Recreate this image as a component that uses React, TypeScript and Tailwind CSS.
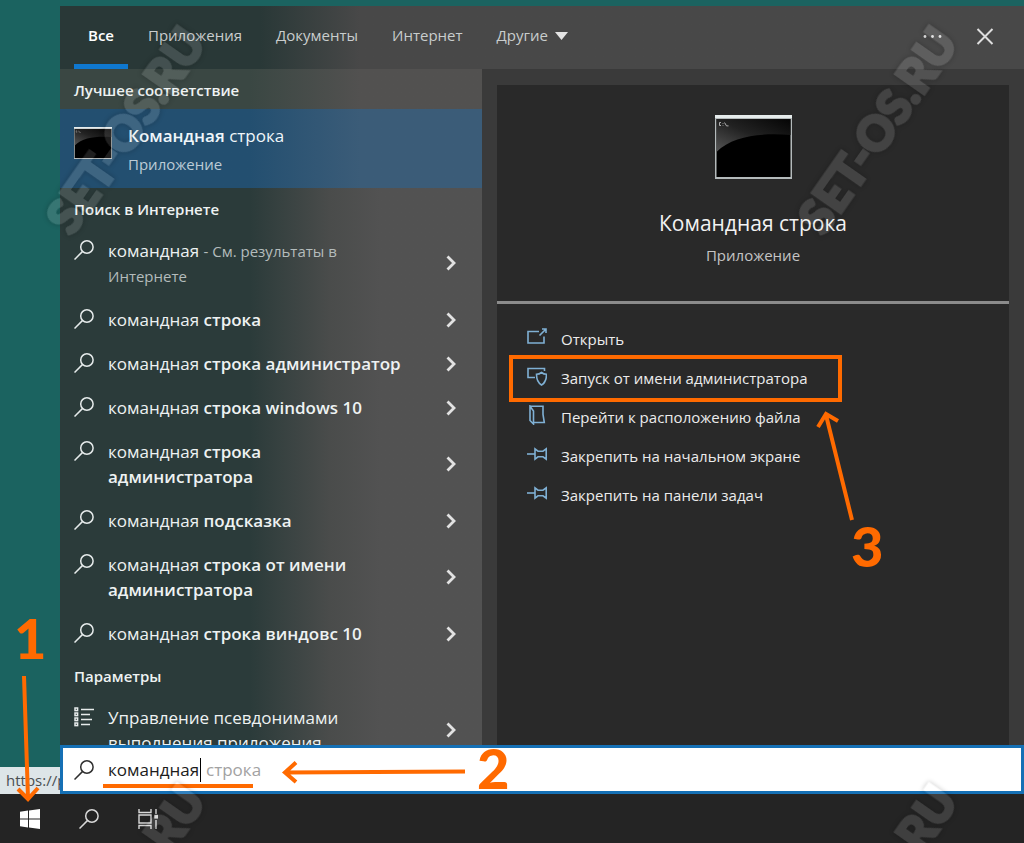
import React from 'react';

const tabs = ['Все', 'Приложения', 'Документы', 'Интернет'];

const suggestions = [
  { typed: 'командная', hint: 'См. результаты в Интернете' },
  { typed: 'командная', rest: 'строка' },
  { typed: 'командная', rest: 'строка администратор' },
  { typed: 'командная', rest: 'строка windows 10' },
  { typed: 'командная', rest: 'строка администратора' },
  { typed: 'командная', rest: 'подсказка' },
  { typed: 'командная', rest: 'строка от имени администратора' },
  { typed: 'командная', rest: 'строка виндовс 10' },
];

const SearchIcon = () => (
  <svg className="w-5 h-5 shrink-0" viewBox="0 0 20 20" fill="none" stroke="currentColor" strokeWidth="1.5">
    <circle cx="12.9" cy="7" r="6.2" />
    <path d="M8.4 11.6 0.5 19.5" />
  </svg>
);

const Chevron = () => (
  <svg className="w-[10px] h-4 shrink-0 text-[#e2e2e2]" viewBox="0 0 10 16" fill="none" stroke="currentColor" strokeWidth="2.8">
    <path d="M1.5 1.5 8 8l-6.5 6.5" />
  </svg>
);

const SettingsListIcon = () => (
  <svg className="w-5 h-5 shrink-0" viewBox="0 0 20 20" fill="none" stroke="currentColor">
    <path strokeWidth="1.6" d="M7 2.500h13M7 7.500h9M7 12.500h11M7 17.500h9" />
    <g strokeWidth="1.5">
      <rect x="1" y="1" width="2.600" height="2.600" />
      <rect x="1" y="6" width="2.600" height="2.600" />
      <rect x="1" y="11" width="2.600" height="2.600" />
      <rect x="1" y="16" width="2.600" height="2.600" />
    </g>
  </svg>
);

const ConsoleIcon = ({ className }: { className: string }) => (
  <svg className={className} viewBox="0 0 77 64" preserveAspectRatio="none">
    <defs>
      <linearGradient id="glare" x1="0" y1="1" x2="1" y2="0">
        <stop offset="0" stopColor="#565656" />
        <stop offset="0.5" stopColor="#222" />
        <stop offset="1" stopColor="#050505" />
      </linearGradient>
    </defs>
    <rect width="77" height="64" fill="#b4babb" />
    <rect width="77" height="3" fill="#e6ecec" />
    <rect x="1.5" y="4" width="74" height="58" fill="#000" />
    <path d="M1.5 4h74v16C48 18 18 20 1.5 37Z" fill="url(#glare)" />
    <path d="M6 7.5H4.5v3H6M8 8v.8M8 10v.6M9.5 7.5l2 3.4h2" stroke="#bbb" strokeWidth="0.9" fill="none" />
  </svg>
);

const OpenIcon = () => (
  <svg className="w-5 h-5" viewBox="0 0 20 20" fill="none" stroke="currentColor" strokeWidth="1.6">
    <path d="M12 4.500H1v11.500h16V9.500" />
    <path d="m12.500 8.500 6-6M15 2h4v4" />
  </svg>
);

const AdminIcon = () => (
  <svg className="w-5 h-5" viewBox="0 0 20 20" fill="none" stroke="currentColor" strokeWidth="1.6">
    <path d="M8 11.500H1V2.500h16.500V5" />
    <path d="M14.500 6.500c1.400 1.100 3 1.700 5 1.800 0 5.500-1.300 8.500-5 10.700-3.700-2.200-5-5.200-5-10.700 2-.1 3.600-.7 5-1.800Z" />
  </svg>
);

const FolderIcon = () => (
  <svg className="w-5 h-5" viewBox="0 0 20 20" fill="none" stroke="currentColor" strokeWidth="1.6">
    <path d="M3 1.200h13v8.300l1.300 8H7" />
    <path d="M3 1.200v14.300l3.500 3.500V6L3 1.200Z" />
  </svg>
);

const PinIcon = () => (
  <svg className="w-5 h-5" viewBox="0 0 20 20" fill="none" stroke="currentColor" strokeWidth="1.6">
    <path d="M0 10h8" />
    <path d="M8 4.800v10.400l3-2.400h5l3.200 2.400V4.800L16 7.200h-5L8 4.800Z" />
  </svg>
);

const actions = [
  { label: 'Открыть', icon: OpenIcon },
  { label: 'Запуск от имени администратора', icon: AdminIcon, marked: true },
  { label: 'Перейти к расположению файла', icon: FolderIcon },
  { label: 'Закрепить на начальном экране', icon: PinIcon },
  { label: 'Закрепить на панели задач', icon: PinIcon },
];

const GroupTitle = ({ children }: { children: React.ReactNode }) => (
  <h2 className="h-10 pt-[2px] pl-[14px] flex items-center text-[15px] font-semibold text-[#eef2f2]">{children}</h2>
);

const Row = ({ icon, children }: { icon: React.ReactNode; children: React.ReactNode }) => (
  <button className="w-full flex items-center justify-between pl-[14px] pr-[26px] pt-[10px] pb-[9px] text-left">
    <span className="flex gap-[14px] text-[#e6ebeb]">
      <span className="pt-[2px]">{icon}</span>
      <span className="max-w-[298px] text-[17px] leading-[25px] text-[#eef2f2]">{children}</span>
    </span>
    <Chevron />
  </button>
);

const Watermark = ({ className }: { className: string }) => (
  <div
    aria-hidden="true"
    className={`absolute w-[270px] h-12 flex items-center justify-center -rotate-[55deg] font-['Lato'] font-black text-[47px] leading-none text-white opacity-12 pointer-events-none select-none [-webkit-text-stroke:3px_#fff] [filter:drop-shadow(0_0_2px_#000)_drop-shadow(0_0_2px_#000)] ${className}`}
  >
    SET-OS.RU
  </div>
);

const Digit = ({ value, className }: { value: string; className: string }) => (
  <span className={`absolute font-['Lato'] text-[56px] leading-[56px] font-black text-[#ff6a00] pointer-events-none ${className}`}>{value}</span>
);

const App = () => {
  return (
    <div className="relative h-screen flex flex-col overflow-hidden bg-[#1b6360] font-['Open_Sans','Noto_Sans',sans-serif]">
      <div className="flex-1 min-h-0 flex pt-[6px]">
        {/* Desktop strip with the browser status bubble */}
        <div className="w-[60px] shrink-0 flex flex-col justify-end">
          <div className="h-[27px] pl-[6px] flex items-center overflow-hidden whitespace-nowrap bg-[#dde5e8] text-[15px] text-[#4a4f52]">
            https://p
          </div>
        </div>

        <div className="flex-1 min-w-0 flex flex-col">
          <header className="h-[63px] shrink-0 flex justify-between pl-3 bg-linear-to-r from-[#293837] from-[200px] to-[#484848] to-[300px]">
            <nav className="flex gap-[2px] text-[15px] text-[#c9cdcd]">
              {tabs.map((tab, i) => (
                <button key={tab} className={i === 0 ? 'relative px-4 pb-1 font-semibold text-white' : 'px-4 pb-1'}>
                  {tab}
                  {i === 0 && <span className="absolute bottom-0 inset-x-[2px] h-[5px] bg-[#0f78cf]" />}
                </button>
              ))}
              <button className="px-4 pb-1 flex items-center gap-[7px]">
                Другие
                <svg className="w-[13px] h-2" viewBox="0 0 13 8" fill="#e4e4e4">
                  <path d="M0 0h13L6.500 8Z" />
                </svg>
              </button>
            </nav>
            <div className="flex items-center gap-[34px] pr-[30px] pb-[2px] text-[#dedede]">
              <button aria-label="Параметры поиска">
                <svg className="w-5 h-5" viewBox="0 0 20 20" fill="currentColor">
                  <circle cx="3" cy="9.500" r="1.400" />
                  <circle cx="10.500" cy="9.500" r="1.400" />
                  <circle cx="18" cy="9.500" r="1.400" />
                </svg>
              </button>
              <button aria-label="Закрыть">
                <svg className="w-[18px] h-[18px]" viewBox="0 0 18 18" stroke="currentColor" strokeWidth="2">
                  <path d="m1.500 1 15 15M16.500 1l-15 15" />
                </svg>
              </button>
            </div>
          </header>

          <div className="flex-1 min-h-0 flex">
            <section className="w-[422px] shrink-0 overflow-hidden bg-linear-to-r from-[#2b3b3a] from-[190px] via-[#4a4c4b] via-[270px] to-[#525252] to-[320px]">
              <div className="bg-linear-to-r from-[#3a4743] from-[190px] to-[#525150] to-[300px]">
                <GroupTitle>Лучшее соответствие</GroupTitle>
              </div>
              <button className="w-full h-[79px] flex items-start gap-4 pl-[14px] text-left bg-linear-to-r from-[#234f70] from-[190px] to-[#3b5c78] to-[300px]">
                <ConsoleIcon className="w-[38px] h-8 mt-[18px]" />
                <span className="pt-3 flex flex-col leading-[29px]">
                  <span className="text-[17px] text-[#eff6fa]">
                    <b className="font-semibold">Командная</b> строка
                  </span>
                  <span className="text-[15px] text-[#bccbd6]">Приложение</span>
                </span>
              </button>

              <GroupTitle>Поиск в Интернете</GroupTitle>
              {suggestions.map((s, i) => (
                <Row key={i} icon={<SearchIcon />}>
                  {s.typed}{' '}
                  {s.hint && <span className="text-[15px] leading-none text-[#b4bcbc]">- {s.hint}</span>}
                  {s.rest && <b className="font-semibold">{s.rest}</b>}
                </Row>
              ))}

              <GroupTitle>Параметры</GroupTitle>
              <Row icon={<SettingsListIcon />}>Управление псевдонимами выполнения приложения</Row>
            </section>

            <section className="flex-1 min-w-0 flex flex-col px-[15px] pt-4 bg-[#3a3a3a]">
              <div className="flex-1 bg-[#292929]">
                <div className="h-[219px] pt-[30px] flex flex-col items-center border-b-3 border-[#8b8b8b]">
                  <ConsoleIcon className="w-[77px] h-16" />
                  <h1 className="mt-7 text-[21px] leading-8 text-[#f2f2f2]">Командная строка</h1>
                  <p className="mt-1 text-[15px] leading-6 text-[#c4c4c4]">Приложение</p>
                </div>
                <ul className="relative pt-4">
                  {actions.map(({ label, icon: Icon, marked }) => (
                    <li key={label} className="relative">
                      <button className="h-[39px] pl-[30px] flex items-center gap-[14px] text-[15px] text-[#ececec]">
                        <span className="pb-[6px] text-[#7fb0d4]">
                          <Icon />
                        </span>
                        {label}
                      </button>
                      {marked && (
                        <span className="absolute -inset-y-1 left-3 w-[333px] border-4 border-[#ff6a00] pointer-events-none" />
                      )}
                    </li>
                  ))}
                  <svg
                    className="absolute left-[318px] top-[106px] w-10 h-[112px] pointer-events-none"
                    viewBox="0 0 40 112"
                    fill="none"
                    stroke="#ff6a00"
                    strokeWidth="4"
                  >
                    <path d="M37 110 11 5M3 17 11 4l12 7" />
                  </svg>
                  <Digit value="3" className="left-[354px] top-[214px]" />
                </ul>
              </div>
            </section>
          </div>

          <div className="relative h-[49px] shrink-0 flex items-center pl-[11px] bg-white border-3 border-[#1570b5] text-[17px]">
            <label htmlFor="query" aria-label="Поиск" className="mr-[14px] text-[#2f2f2f]">
              <SearchIcon />
            </label>
            <input id="query" className="field-sizing-content text-[#1c1c1c] outline-none" defaultValue="командная" />
            <span className="w-px h-6 mx-px bg-black" />
            <span className="pl-1 text-[#a2a2a2]">строка</span>
            <span className="absolute left-10 bottom-[3px] w-[150px] h-1 bg-[#ff6a00]" />
            <svg
              className="absolute left-[218px] top-[12px] w-[186px] h-6 pointer-events-none"
              viewBox="0 0 186 24"
              fill="none"
              stroke="#ff6a00"
              strokeWidth="4"
            >
              <path d="M184 11.500 4 12.500M15 2.500 4 12.500l11 9.500" />
            </svg>
            <Digit value="2" className="left-[414px] top-[-8px]" />
          </div>
        </div>
      </div>

      <footer className="h-[49px] shrink-0 flex bg-[#242424] text-[#d8d8d8]">
        <button aria-label="Пуск" className="w-[59px] flex items-center justify-center">
          <svg className="w-5 h-5" viewBox="0 0 20 20" fill="#fff">
            <path d="M0 2.800 8 1.600v7.900H0ZM9 1.500 20 0v9.500H9ZM0 10.500h8v7.900l-8-1.200ZM9 10.500h11V20L9 18.500Z" />
          </svg>
        </button>
        <button aria-label="Поиск" className="w-[59px] flex items-center justify-center">
          <SearchIcon />
        </button>
        <button aria-label="Представление задач" className="w-[59px] flex items-center justify-center">
          <svg className="w-5 h-5" viewBox="0 0 20 20" fill="none" stroke="currentColor" strokeWidth="1.400">
            <path d="M1 0v3.500h12V0M1 20v-3.500h12V20M1 6h12v8H1ZM18 0v5M18 11v9" />
            <rect x="17" y="6.500" width="2.400" height="2.400" fill="currentColor" />
          </svg>
        </button>
      </footer>

      <Digit value="1" className="left-[14px] bottom-[177px]" />
      <svg
        className="absolute left-4 bottom-10 w-6 h-[128px] pointer-events-none"
        viewBox="0 0 24 128"
        fill="none"
        stroke="#ff6a00"
        strokeWidth="4"
      >
        <path d="M8 1 12 123M2 114l10 10 10-11" />
      </svg>

      <Watermark className="left-[-10px] top-[106px]" />
      <Watermark className="left-[742px] top-[106px]" />
      <Watermark className="left-[-10px] top-[864px]" />
      <Watermark className="left-[742px] top-[864px]" />
    </div>
  );
};

export default App;
